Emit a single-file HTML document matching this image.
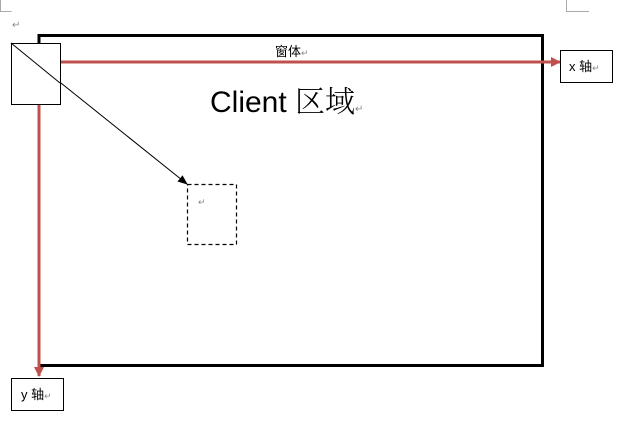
<!DOCTYPE html>
<html><head><meta charset="utf-8"><style>
body{margin:0;width:624px;height:424px;background:#fff;overflow:hidden;font-family:"Liberation Sans","Noto Sans CJK SC",sans-serif}
</style></head><body>
<svg width="624" height="424" viewBox="0 0 624 424" style="position:absolute;left:0;top:0">
<defs>
<marker id="ra" markerWidth="10" markerHeight="10" refX="9" refY="5" orient="auto" markerUnits="userSpaceOnUse"><path d="M0,0 L10,5 L0,10 Z" fill="#c0504d"/></marker>
<marker id="ba" markerWidth="10" markerHeight="10" refX="9" refY="5" orient="auto" markerUnits="userSpaceOnUse"><path d="M0,1 L10,5 L0,9 Z" fill="#000"/></marker>
</defs>
<path d="M0.5,0 V11.5 H11.5" fill="none" stroke="#aaa"/>
<path d="M566.5,0 V11.5 H589" fill="none" stroke="#aaa"/>
<text x="12" y="28" font-size="10" fill="#888">↵</text>
<path d="M39,44 V35.5 H542.5 V365.5 H39" fill="none" stroke="#000" stroke-width="3"/>
<line x1="39" y1="104" x2="39" y2="376" stroke="#c0504d" stroke-width="3" marker-end="url(#ra)"/>
<line x1="60" y1="62" x2="560" y2="62" stroke="#c0504d" stroke-width="3" marker-end="url(#ra)"/>
<line x1="11" y1="43" x2="187" y2="184" stroke="#000" stroke-width="1" marker-end="url(#ba)"/>
<rect x="11.5" y="43.5" width="49" height="61" fill="#fff" stroke="#000"/>
<line x1="11" y1="43" x2="60" y2="83" stroke="#000" stroke-width="1"/>
<rect x="187.5" y="184.5" width="49" height="60" fill="none" stroke="#000" stroke-dasharray="4,3" stroke-width="1.2"/>
<text x="198" y="205" font-size="9" fill="#888">↵</text>
<rect x="560.5" y="50.5" width="52" height="32" fill="#fff" stroke="#000"/>
<text x="569" y="71" font-size="13">x 轴<tspan font-size="9" fill="#888">↵</tspan></text>
<rect x="11.5" y="378.5" width="52" height="32" fill="#fff" stroke="#000"/>
<text x="21" y="399" font-size="13">y 轴<tspan font-size="9" fill="#888">↵</tspan></text>
<text x="275" y="56" font-size="13">窗体<tspan font-size="9" fill="#888">↵</tspan></text>
<text x="210" y="112" font-size="30">Client <tspan font-family="'Noto Serif CJK SC',serif" font-weight="300">区域</tspan><tspan font-size="10" fill="#888">↵</tspan></text>
</svg>
</body></html>
